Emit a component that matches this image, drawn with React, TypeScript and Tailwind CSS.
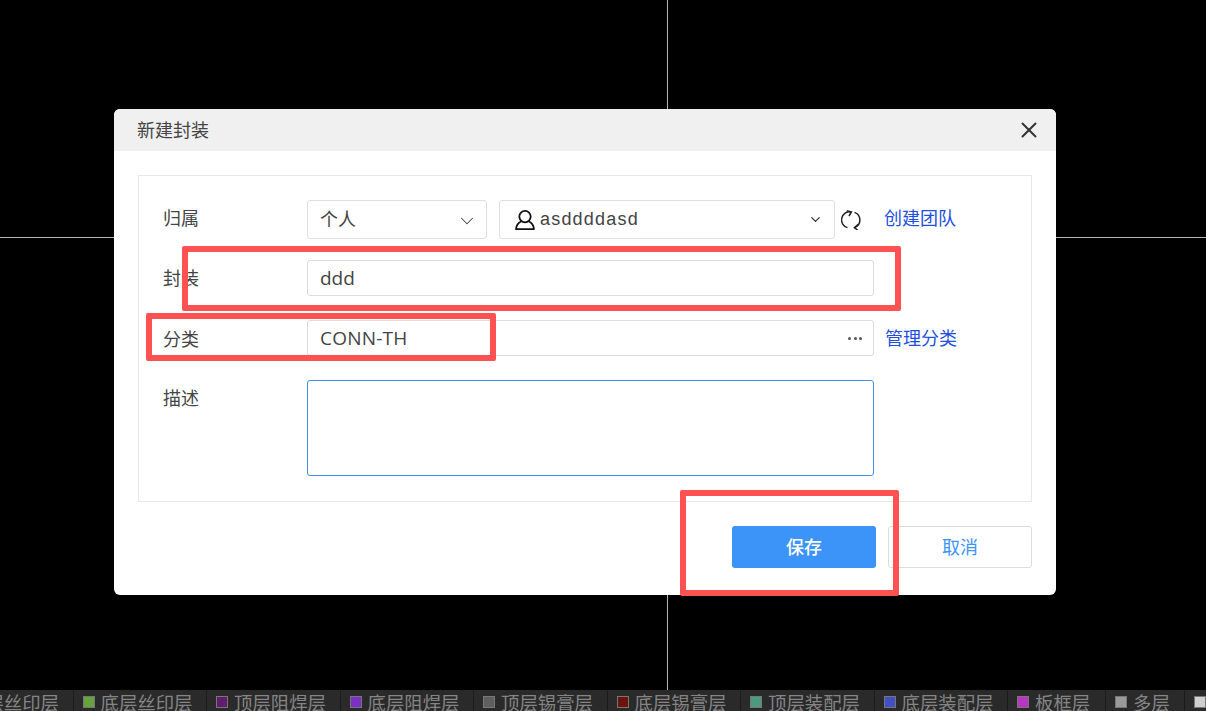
import React from 'react';
import { ChevronDown, X } from 'lucide-react';

const cjk = "font-['Open_Sans','Noto_Sans_CJK_SC',sans-serif]";

const layers = [
  { name: '顶层丝印层', color: 'bg-[#c9c9c9]' },
  { name: '底层丝印层', color: 'bg-[#66a33c]' },
  { name: '顶层阻焊层', color: 'bg-[#5f1d6b]' },
  { name: '底层阻焊层', color: 'bg-[#7b2fc4]' },
  { name: '顶层锡膏层', color: 'bg-[#5f5f5f]' },
  { name: '底层锡膏层', color: 'bg-[#6b130c]' },
  { name: '顶层装配层', color: 'bg-[#4a9c7d]' },
  { name: '底层装配层', color: 'bg-[#4350c4]' },
  { name: '板框层', color: 'bg-[#b935c4]', width: 'w-[98px]' },
  { name: '多层', color: 'bg-[#9a9a9a]', width: 'w-[79px]' },
  { name: '', color: 'bg-[#cfcfcf]', width: 'w-[40px]' },
];

const LayerBar: React.FC = () => (
  <div className="flex h-[21px] w-[1266px] shrink-0 overflow-hidden bg-[#2a2a2a] -ml-[60px]">
    {layers.map((layer, i) => (
      <div
        key={i}
        className={`flex h-full shrink-0 items-center border-r border-[#1c1c1c] pl-[9px] pt-[3px] ${layer.width ?? 'w-[133.5px]'}`}
      >
        <span className={`h-[12px] w-[12px] shrink-0 border border-[#777] ${layer.color}`}></span>
        <span className="ml-[6px] whitespace-nowrap text-[18.4px] leading-[21px] text-[#858585]">{layer.name}</span>
      </div>
    ))}
  </div>
);

const Row: React.FC<{ label: string; top?: boolean; className?: string; labelClass?: string; children: React.ReactNode }> = ({
  label,
  top,
  className,
  labelClass,
  children,
}) => (
  <div className={`flex ${top ? 'items-start' : 'items-center'} ${className ?? ''}`}>
    <div className={`w-[168px] shrink-0 pl-[24px] text-[18px] leading-[24px] text-[#444] ${labelClass ?? ''}`}>
      {label}
    </div>
    {children}
  </div>
);

const UserIcon = () => (
  <svg width="20" height="20" viewBox="0 0 20 20" fill="none" stroke="#111" strokeWidth="1.8" className="shrink-0">
    <ellipse cx="10" cy="6.6" rx="5.7" ry="5.7" />
    <path d="M6.4 11.2C3.2 12.8 1.2 15.4 1 19.1h18c-.2-3.7-2.2-6.3-5.4-7.9" strokeLinejoin="round" />
  </svg>
);

const SyncIcon = () => (
  <svg width="20" height="20" viewBox="0 0 20 20" fill="none" stroke="#222" strokeWidth="1.5" className="ml-[6px] shrink-0">
    <path d="M6.5 17.6A8 8 0 0 1 10 2" />
    <path d="M5.8 .8 10.4 2 8 6" />
    <path d="M13.5 2.4A8 8 0 0 1 13.8 17.4" />
    <path d="M17.2 14.4 13.4 17.6 16.6 20" />
  </svg>
);

const App: React.FC = () => {
  return (
    <div className={`relative flex h-[711px] w-[1206px] flex-col overflow-hidden bg-black ${cjk}`}>
      {/* canvas crosshair */}
      <div className="absolute left-[667px] top-0 h-[690px] w-px bg-[#b5b5b5]"></div>
      <div className="absolute left-0 top-[237px] h-px w-full bg-[#b5b5b5]"></div>

      <div className="relative flex-1 pl-[114px] pt-[109px]">
        <div className="relative z-10 h-[486px] w-[942px] overflow-hidden rounded-[6px] bg-white">
          <div className="flex h-[42px] items-center justify-between bg-[#f0f0f0] pl-[23px] pr-[14px]">
            <span className="text-[18px] leading-[24px] text-[#444] -mt-[1px]">新建封装</span>
            <X size={26} strokeWidth={1.8} className="text-[#333]" />
          </div>

          <div className="mx-[24px] mt-[24px] h-[327px] border border-[#e8e8e8] pt-[24px]">
            <Row label="归属" labelClass="-mt-[3px]">
              <div className="flex h-[39px] w-[180px] items-center justify-between rounded-[3px] border border-[#dcdfe6] pl-[12px] pr-[8px]">
                <span className="text-[18px] text-[#444]">个人</span>
                <ChevronDown size={22} strokeWidth={1.1} className="mt-[2px] text-[#444]" />
              </div>
              <div className="ml-[12px] flex h-[39px] w-[336px] items-center rounded-[3px] border border-[#dcdfe6] pl-[15px] pr-[11px]">
                <UserIcon />
                <span className="ml-[5px] flex-1 font-['Liberation_Sans'] text-[18px] tracking-[1.2px] text-[#444]">asddddasd</span>
                <ChevronDown size={15} strokeWidth={2} className="text-[#333]" />
              </div>
              <SyncIcon />
              <a className="ml-[23px] -mt-[2px] text-[18px] text-[#1f4fe0]">创建团队</a>
            </Row>

            <Row label="封装" className="mt-[21px]">
              <div className="flex h-[36px] w-[567px] items-center rounded-[3px] border border-[#dcdcdc] px-[12px] text-[19px] text-[#444]">
                ddd
              </div>
            </Row>

            <Row label="分类" className="mt-[24px]" labelClass="mt-[1px]">
              <div className="flex h-[36px] w-[567px] items-center justify-between rounded-[3px] border border-[#dcdcdc] pl-[12px] pr-[11px] text-[19px] tracking-[0.2px] text-[#444]">
                <span>CONN-TH</span>
                <span className="flex gap-[2.5px]">
                  <i className="h-[3px] w-[3px] rounded-full bg-[#555]"></i>
                  <i className="h-[3px] w-[3px] rounded-full bg-[#555]"></i>
                  <i className="h-[3px] w-[3px] rounded-full bg-[#555]"></i>
                </span>
              </div>
              <a className="ml-[11px] text-[18px] text-[#1f4fe0]">管理分类</a>
            </Row>

            <Row label="描述" top className="mt-[24px]" labelClass="pt-[6px]">
              <div className="h-[96px] w-[567px] rounded-[3px] border border-[#3f8fef]"></div>
            </Row>
          </div>

          <div className="mr-[24px] mt-[24px] flex justify-end gap-[12px]">
            <button className="h-[42px] w-[144px] rounded-[3px] bg-[#3c94f8] text-[18px] font-medium text-white">保存</button>
            <button className="h-[42px] w-[144px] rounded-[3px] border border-[#dcdcdc] bg-white text-[18px] text-[#3c94f8]">取消</button>
          </div>
        </div>
      </div>

      <LayerBar />

      {/* red annotation boxes */}
      <div className="absolute left-[182px] top-[246px] z-20 h-[65px] w-[719px] rounded-[2px] border-[6px] border-[#fe5252]"></div>
      <div className="absolute left-[146px] top-[313px] z-20 h-[48px] w-[350px] rounded-[2px] border-[6px] border-[#fe5252]"></div>
      <div className="absolute left-[680px] top-[490px] z-20 h-[106px] w-[219px] rounded-[2px] border-[6px] border-[#fe5252]"></div>
    </div>
  );
};

export default App;
